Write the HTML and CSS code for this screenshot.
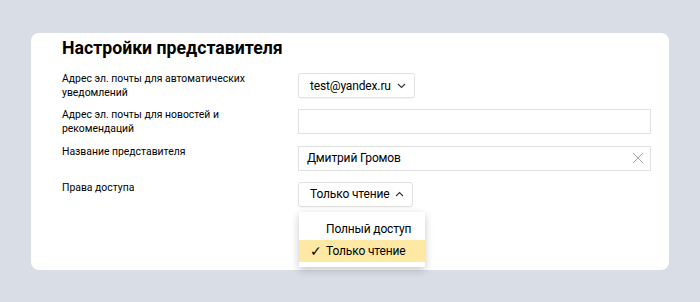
FILE: index.html
```html
<!DOCTYPE html>
<html lang="ru">
<head>
<meta charset="utf-8">
<link rel="stylesheet" href="styles.css">
</head>
<body>
<div class="card">
  <h1 class="title">Настройки представителя</h1>
  <div class="form">
    <div class="label">Адрес эл. почты для автоматических уведомлений</div>
    <div class="control">
      <button class="select">test@yandex.ru
        <svg class="chev" width="9" height="6" viewBox="0 0 9 6"><path d="M1 1l3.5 3.5L8 1" fill="none" stroke="#333" stroke-width="1.1"/></svg>
      </button>
    </div>
    <div class="label">Адрес эл. почты для новостей и рекомендаций</div>
    <div class="control"><div class="input"></div></div>
    <div class="label">Название представителя</div>
    <div class="control"><div class="input">Дмитрий Громов
      <svg class="clear" width="12" height="12" viewBox="0 0 12 12"><path d="M1 1l10 10M11 1L1 11" stroke="#a8a8a8" stroke-width="1"/></svg>
    </div></div>
    <div class="label">Права доступа</div>
    <div class="control">
      <div class="dd">
        <button class="select sm">Только чтение
          <svg class="chev" width="9" height="6" viewBox="0 0 9 6"><path d="M1 5l3.5-3.5L8 5" fill="none" stroke="#333" stroke-width="1.1"/></svg>
        </button>
        <div class="menu">
          <div class="item">Полный доступ</div>
          <div class="item active"><span class="check">✓</span>Только чтение</div>
        </div>
      </div>
    </div>
  </div>
</div>
</body>
</html>
```
FILE: styles.css
```css
html, body { margin: 0; padding: 0; }
body {
  background: #d9dde6;
  font-family: "Roboto", "Noto Sans", sans-serif;
  color: #000;
  width: 700px;
  height: 302px;
  overflow: hidden;
}
.card {
  margin: 33px 0 0 31px;
  width: 638px;
  height: 237px;
  box-sizing: border-box;
  background: #fff;
  border-radius: 8px;
  padding: 3px 18px 0 31px;
}
.title {
  margin: 0;
  font-size: 17.7px;
  line-height: 24px;
  font-weight: 700;
}
.form {
  margin-top: 13px;
  display: grid;
  grid-template-columns: 236px 353px;
  grid-auto-rows: 25px;
  row-gap: 11.3px;
}
.label {
  font-size: 10.4px;
  line-height: 14px;
  width: 200px;
  margin-top: -1px;
}
.control { display: flex; align-items: flex-start; }
.select {
  height: 25px;
  box-sizing: border-box;
  border: 1px solid #e2e2e2;
  border-radius: 3px;
  background: #fff;
  font-family: inherit;
  font-size: 12px;
  letter-spacing: -0.15px;
  color: #000;
  padding: 0 8px 0 11px;
  display: flex;
  align-items: center;
  gap: 6px;
  box-shadow: 0 1px 1px rgba(0,0,0,0.04);
}
.input {
  width: 100%;
  height: 25px;
  box-sizing: border-box;
  border: 1px solid #e2e2e2;
  display: flex;
  align-items: center;
  justify-content: space-between;
  padding: 0 6px 0 8px;
  font-size: 12px;
  letter-spacing: -0.15px;
}
.dd { position: relative; }
.menu {
  position: absolute;
  top: 30px;
  left: 1px;
  width: 126px;
  background: #fff;
  box-shadow: 0 3px 8px rgba(0,0,0,0.22);
  padding: 6px 0 5px;
  font-size: 12px;
  letter-spacing: -0.15px;
}
.item {
  height: 22px;
  line-height: 22px;
  padding-left: 27px;
  position: relative;
}
.item.active { background: #fde9a4; }
.check {
  position: absolute;
  left: 11px;
  top: 0;
  font-size: 14px;
}
```
